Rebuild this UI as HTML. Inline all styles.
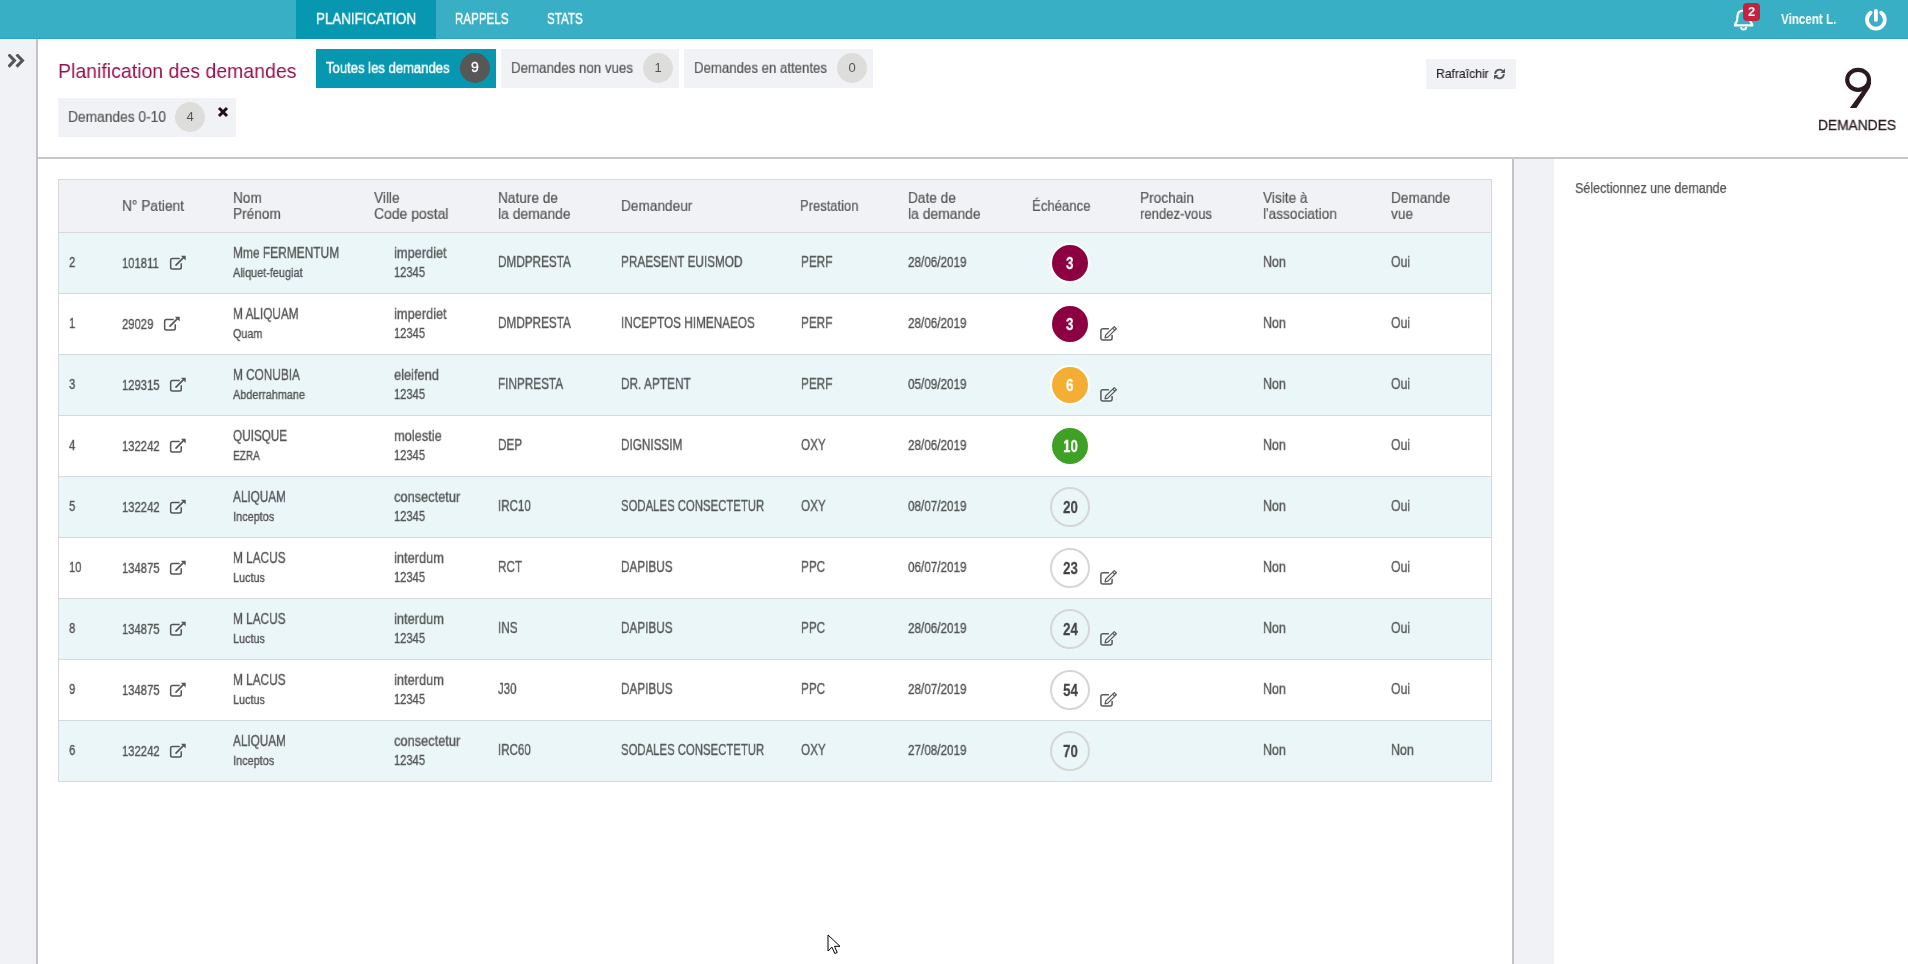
<!DOCTYPE html>
<html><head><meta charset="utf-8"><style>
html,body{margin:0;padding:0;width:1908px;height:964px;overflow:hidden;background:#fff;position:relative}
body{font-family:"Liberation Sans",sans-serif}
.t{position:absolute;white-space:nowrap;transform-origin:0 0;will-change:transform}
.r{position:absolute;box-sizing:border-box}
.r svg{display:block}
.c{position:absolute;text-align:center;font-family:"Liberation Sans",sans-serif;will-change:transform}
</style></head><body>
<div class="r" style="left:0px;top:0px;width:1908px;height:39px;background:#39afc5"></div>
<div class="r" style="left:0px;top:38px;width:1908px;height:1px;background:#2ba8c1"></div>
<div class="r" style="left:296px;top:0px;width:140px;height:39px;background:#0897b0"></div>
<span class="t" style="left:315.5px;top:11.84px;font-size:16px;line-height:16px;color:#fff;font-weight:400;transform:scale(0.8352,0.92);-webkit-text-stroke:0.45px #fff;">PLANIFICATION</span>
<span class="t" style="left:454.8px;top:11.84px;font-size:16px;line-height:16px;color:#fff;font-weight:400;transform:scale(0.7248,0.92);-webkit-text-stroke:0.45px #fff;">RAPPELS</span>
<span class="t" style="left:547.1px;top:11.84px;font-size:16px;line-height:16px;color:#fff;font-weight:400;transform:scale(0.7272,0.92);-webkit-text-stroke:0.45px #fff;">STATS</span>
<span class="t" style="left:1780.8px;top:11.63px;font-size:14.5px;line-height:14.5px;color:#fff;font-weight:700;transform:scaleX(0.8009);">Vincent L.</span>
<div class="r" style="left:0px;top:39px;width:36px;height:925px;background:#f0f2f5"></div>
<div class="r" style="left:36px;top:39px;width:2px;height:925px;background:#c4c4c4"></div>
<span class="t" style="left:58.1px;top:60.12px;font-size:21px;line-height:21px;color:#9c0f4f;font-weight:400;transform:scaleX(0.9285);">Planification des demandes</span>
<div class="r" style="left:316px;top:49px;width:180px;height:39px;background:#0897b0"></div>
<span class="t" style="left:325.9px;top:60.54px;font-size:16px;line-height:16px;color:#fff;font-weight:400;transform:scale(0.8170,0.92);-webkit-text-stroke:0.45px #fff;">Toutes les demandes</span>
<div class="r" style="left:460px;top:53px;width:30px;height:30px;background:#575757;border-radius:50%"></div>
<div class="r" style="left:501px;top:49px;width:178px;height:39px;background:#f0f2f5"></div>
<span class="t" style="left:511.0px;top:60.54px;font-size:16px;line-height:16px;color:#555;font-weight:400;transform:scale(0.8312,0.92);-webkit-text-stroke:0.2px currentColor;">Demandes non vues</span>
<div class="r" style="left:643px;top:53px;width:30px;height:30px;background:#dddddb;border-radius:50%"></div>
<div class="r" style="left:684px;top:49px;width:189px;height:39px;background:#f0f2f5"></div>
<span class="t" style="left:693.9px;top:60.54px;font-size:16px;line-height:16px;color:#555;font-weight:400;transform:scale(0.8260,0.92);-webkit-text-stroke:0.2px currentColor;">Demandes en attentes</span>
<div class="r" style="left:837px;top:53px;width:30px;height:30px;background:#dddddb;border-radius:50%"></div>
<div class="r" style="left:58px;top:98px;width:178px;height:39px;background:#f0f2f5"></div>
<span class="t" style="left:67.8px;top:109.54px;font-size:16px;line-height:16px;color:#555;font-weight:400;transform:scale(0.8607,0.92);-webkit-text-stroke:0.2px currentColor;">Demandes 0-10</span>
<div class="r" style="left:175px;top:102px;width:30px;height:30px;background:#dddddb;border-radius:50%"></div>
<div class="c" style="left:460px;top:53px;width:30px;height:30px;color:#fff;font-size:14px;line-height:29px;-webkit-text-stroke:0.3px #fff">9</div>
<div class="c" style="left:643px;top:53px;width:30px;height:30px;color:#555;font-size:13px;line-height:29px">1</div>
<div class="c" style="left:837px;top:53px;width:30px;height:30px;color:#555;font-size:13px;line-height:29px">0</div>
<div class="c" style="left:175px;top:102px;width:30px;height:30px;color:#555;font-size:13px;line-height:29px">4</div>
<div class="r" style="left:1426px;top:59px;width:90px;height:30px;background:#f0f2f5"></div>
<span class="t" style="left:1436.2px;top:67.10px;font-size:13px;line-height:13px;color:#2b2024;font-weight:400;transform:scaleX(0.9333);-webkit-text-stroke:0.15px #2b2024;">Rafraîchir</span>
<div class="r" style="left:1840px;top:64px;width:36px;height:48px"><svg width="36" height="48" viewBox="0 0 36 48"><ellipse cx="18.1" cy="15.8" rx="10.9" ry="10" fill="none" stroke="#2b1b21" stroke-width="4.2"/><path d="M31.2 17.5Q31 23 27 28L16.4 44L9.8 44L23.5 25.4Z" fill="#2b1b21"/></svg></div>
<span class="t" style="left:1818.2px;top:118.15px;font-size:14px;line-height:14px;color:#2b1b21;font-weight:400;transform:scaleX(0.9830);-webkit-text-stroke:0.3px #2b1b21;">DEMANDES</span>
<div class="r" style="left:38px;top:157px;width:1870px;height:2px;background:#c8c8c8"></div>
<div class="r" style="left:1512px;top:159px;width:2px;height:805px;background:#c4c4c4"></div>
<div class="r" style="left:1514px;top:159px;width:40px;height:805px;background:#f0f2f5"></div>
<span class="t" style="left:1574.7px;top:180.20px;font-size:15px;line-height:15px;color:#555;font-weight:400;transform:scaleX(0.8337);-webkit-text-stroke:0.25px #555;">Sélectionnez une demande</span>
<div class="r" style="left:58px;top:179px;width:1434px;height:54px;background:#f0f2f5"></div>
<div class="r" style="left:58px;top:179px;width:1434px;height:1px;background:#d8d8d8"></div>
<div class="r" style="left:58px;top:232px;width:1434px;height:1px;background:#d8d8d8"></div>
<span class="t" style="left:122.0px;top:199.24px;font-size:16px;line-height:16px;color:#555;font-weight:400;transform:scale(0.8584,0.92);-webkit-text-stroke:0.2px #555;">N° Patient</span>
<span class="t" style="left:232.7px;top:191.24px;font-size:16px;line-height:16px;color:#555;font-weight:400;transform:scale(0.8531,0.92);-webkit-text-stroke:0.2px #555;">Nom</span>
<span class="t" style="left:232.7px;top:207.14px;font-size:16px;line-height:16px;color:#555;font-weight:400;transform:scale(0.8531,0.92);-webkit-text-stroke:0.2px #555;">Prénom</span>
<span class="t" style="left:373.5px;top:191.24px;font-size:16px;line-height:16px;color:#555;font-weight:400;transform:scale(0.8531,0.92);-webkit-text-stroke:0.2px #555;">Ville</span>
<span class="t" style="left:373.5px;top:207.14px;font-size:16px;line-height:16px;color:#555;font-weight:400;transform:scale(0.8723,0.92);-webkit-text-stroke:0.2px #555;">Code postal</span>
<span class="t" style="left:497.9px;top:191.24px;font-size:16px;line-height:16px;color:#555;font-weight:400;transform:scale(0.8531,0.92);-webkit-text-stroke:0.2px #555;">Nature de</span>
<span class="t" style="left:497.9px;top:207.14px;font-size:16px;line-height:16px;color:#555;font-weight:400;transform:scale(0.8681,0.92);-webkit-text-stroke:0.2px #555;">la demande</span>
<span class="t" style="left:620.5px;top:199.24px;font-size:16px;line-height:16px;color:#555;font-weight:400;transform:scale(0.8531,0.92);-webkit-text-stroke:0.2px #555;">Demandeur</span>
<span class="t" style="left:799.8px;top:199.24px;font-size:16px;line-height:16px;color:#555;font-weight:400;transform:scale(0.8105,0.92);-webkit-text-stroke:0.2px #555;">Prestation</span>
<span class="t" style="left:908.0px;top:191.24px;font-size:16px;line-height:16px;color:#555;font-weight:400;transform:scale(0.8531,0.92);-webkit-text-stroke:0.2px #555;">Date de</span>
<span class="t" style="left:908.0px;top:207.14px;font-size:16px;line-height:16px;color:#555;font-weight:400;transform:scale(0.8681,0.92);-webkit-text-stroke:0.2px #555;">la demande</span>
<span class="t" style="left:1032.1px;top:199.24px;font-size:16px;line-height:16px;color:#555;font-weight:400;transform:scale(0.8219,0.92);-webkit-text-stroke:0.2px #555;">Échéance</span>
<span class="t" style="left:1140.0px;top:191.24px;font-size:16px;line-height:16px;color:#555;font-weight:400;transform:scale(0.8531,0.92);-webkit-text-stroke:0.2px #555;">Prochain</span>
<span class="t" style="left:1140.0px;top:207.14px;font-size:16px;line-height:16px;color:#555;font-weight:400;transform:scale(0.8176,0.92);-webkit-text-stroke:0.2px #555;">rendez-vous</span>
<span class="t" style="left:1262.5px;top:191.24px;font-size:16px;line-height:16px;color:#555;font-weight:400;transform:scale(0.8531,0.92);-webkit-text-stroke:0.2px #555;">Visite à</span>
<span class="t" style="left:1262.5px;top:207.14px;font-size:16px;line-height:16px;color:#555;font-weight:400;transform:scale(0.8531,0.92);-webkit-text-stroke:0.2px #555;">l'association</span>
<span class="t" style="left:1390.5px;top:191.24px;font-size:16px;line-height:16px;color:#555;font-weight:400;transform:scale(0.8531,0.92);-webkit-text-stroke:0.2px #555;">Demande</span>
<span class="t" style="left:1390.5px;top:207.14px;font-size:16px;line-height:16px;color:#555;font-weight:400;transform:scale(0.8531,0.92);-webkit-text-stroke:0.2px #555;">vue</span>
<div class="r" style="left:58px;top:233px;width:1434px;height:61px;background:#ebf6f9"></div>
<div class="r" style="left:58px;top:293px;width:1434px;height:1px;background:#d3dadd"></div>
<span class="t" style="left:68.9px;top:255.45px;font-size:14px;line-height:14px;color:#555;font-weight:400;transform:scaleX(0.8040);-webkit-text-stroke:0.35px #555;">2</span>
<span class="t" style="left:122.4px;top:255.95px;font-size:14px;line-height:14px;color:#555;font-weight:400;transform:scaleX(0.8040);-webkit-text-stroke:0.35px #555;">101811</span>
<div class="r" style="left:169.3px;top:255.0px;width:18px;height:16px"><svg width="18" height="16" viewBox="0 0 18 16"><path d="M10.7 3.45H3.4Q1.65 3.45 1.65 5.2V12.3Q1.65 14.05 3.4 14.05H10.5Q12.25 14.05 12.25 12.3V8.2" fill="none" stroke="#555" stroke-width="1.5"/><path d="M7 10.1L14.2 2.9" stroke="#555" stroke-width="1.7" stroke-linecap="round"/><path d="M11.9 0.8H16.7V5.6z" fill="#555"/></svg></div>
<span class="t" style="left:233.0px;top:245.74px;font-size:16px;line-height:16px;color:#555;font-weight:400;transform:scale(0.7466,0.92);-webkit-text-stroke:0.35px #555;">Mme FERMENTUM</span>
<span class="t" style="left:233.0px;top:266.82px;font-size:12.5px;line-height:12.5px;color:#555;font-weight:400;transform:scaleX(0.8708);-webkit-text-stroke:0.35px #555;">Aliquet-feugiat</span>
<span class="t" style="left:394.1px;top:245.74px;font-size:16px;line-height:16px;color:#555;font-weight:400;transform:scale(0.8006,0.92);-webkit-text-stroke:0.35px #555;">imperdiet</span>
<span class="t" style="left:394.3px;top:264.75px;font-size:14px;line-height:14px;color:#555;font-weight:400;transform:scaleX(0.7961);-webkit-text-stroke:0.35px #555;">12345</span>
<span class="t" style="left:498.1px;top:254.64px;font-size:16px;line-height:16px;color:#555;font-weight:400;transform:scale(0.7341,0.92);-webkit-text-stroke:0.35px #555;">DMDPRESTA</span>
<span class="t" style="left:621.4px;top:254.64px;font-size:16px;line-height:16px;color:#555;font-weight:400;transform:scale(0.7359,0.92);-webkit-text-stroke:0.35px #555;">PRAESENT EUISMOD</span>
<span class="t" style="left:800.5px;top:254.64px;font-size:16px;line-height:16px;color:#555;font-weight:400;transform:scale(0.7341,0.92);-webkit-text-stroke:0.35px #555;">PERF</span>
<span class="t" style="left:907.7px;top:255.25px;font-size:14px;line-height:14px;color:#555;font-weight:400;transform:scaleX(0.8347);-webkit-text-stroke:0.35px #555;">28/06/2019</span>
<div class="c" style="left:1050px;top:243px;width:36px;height:36px;border:2px solid #fff;background:#8c0041;border-radius:50%;color:#fff;font-size:17px;line-height:38px;font-weight:700"><span style="display:inline-block;transform:scaleX(0.78);will-change:transform;-webkit-text-stroke:0.3px #fff">3</span></div>
<span class="t" style="left:1262.5px;top:254.64px;font-size:16px;line-height:16px;color:#555;font-weight:400;transform:scale(0.7744,0.92);-webkit-text-stroke:0.35px #555;">Non</span>
<span class="t" style="left:1390.5px;top:254.64px;font-size:16px;line-height:16px;color:#555;font-weight:400;transform:scale(0.7674,0.92);-webkit-text-stroke:0.35px #555;">Oui</span>
<div class="r" style="left:58px;top:294px;width:1434px;height:61px;background:#ffffff"></div>
<div class="r" style="left:58px;top:354px;width:1434px;height:1px;background:#d3dadd"></div>
<span class="t" style="left:68.9px;top:316.45px;font-size:14px;line-height:14px;color:#555;font-weight:400;transform:scaleX(0.8040);-webkit-text-stroke:0.35px #555;">1</span>
<span class="t" style="left:122.4px;top:316.95px;font-size:14px;line-height:14px;color:#555;font-weight:400;transform:scaleX(0.8040);-webkit-text-stroke:0.35px #555;">29029</span>
<div class="r" style="left:163.0px;top:316.0px;width:18px;height:16px"><svg width="18" height="16" viewBox="0 0 18 16"><path d="M10.7 3.45H3.4Q1.65 3.45 1.65 5.2V12.3Q1.65 14.05 3.4 14.05H10.5Q12.25 14.05 12.25 12.3V8.2" fill="none" stroke="#555" stroke-width="1.5"/><path d="M7 10.1L14.2 2.9" stroke="#555" stroke-width="1.7" stroke-linecap="round"/><path d="M11.9 0.8H16.7V5.6z" fill="#555"/></svg></div>
<span class="t" style="left:233.0px;top:306.74px;font-size:16px;line-height:16px;color:#555;font-weight:400;transform:scale(0.7374,0.92);-webkit-text-stroke:0.35px #555;">M ALIQUAM</span>
<span class="t" style="left:233.0px;top:327.82px;font-size:12.5px;line-height:12.5px;color:#555;font-weight:400;transform:scaleX(0.8576);-webkit-text-stroke:0.35px #555;">Quam</span>
<span class="t" style="left:394.1px;top:306.74px;font-size:16px;line-height:16px;color:#555;font-weight:400;transform:scale(0.8006,0.92);-webkit-text-stroke:0.35px #555;">imperdiet</span>
<span class="t" style="left:394.3px;top:325.75px;font-size:14px;line-height:14px;color:#555;font-weight:400;transform:scaleX(0.7961);-webkit-text-stroke:0.35px #555;">12345</span>
<span class="t" style="left:498.1px;top:315.64px;font-size:16px;line-height:16px;color:#555;font-weight:400;transform:scale(0.7341,0.92);-webkit-text-stroke:0.35px #555;">DMDPRESTA</span>
<span class="t" style="left:621.4px;top:315.64px;font-size:16px;line-height:16px;color:#555;font-weight:400;transform:scale(0.7357,0.92);-webkit-text-stroke:0.35px #555;">INCEPTOS HIMENAEOS</span>
<span class="t" style="left:800.5px;top:315.64px;font-size:16px;line-height:16px;color:#555;font-weight:400;transform:scale(0.7341,0.92);-webkit-text-stroke:0.35px #555;">PERF</span>
<span class="t" style="left:907.7px;top:316.25px;font-size:14px;line-height:14px;color:#555;font-weight:400;transform:scaleX(0.8347);-webkit-text-stroke:0.35px #555;">28/06/2019</span>
<div class="c" style="left:1050px;top:304px;width:36px;height:36px;border:2px solid #fff;background:#8c0041;border-radius:50%;color:#fff;font-size:17px;line-height:38px;font-weight:700"><span style="display:inline-block;transform:scaleX(0.78);will-change:transform;-webkit-text-stroke:0.3px #fff">3</span></div>
<div class="r" style="left:1099px;top:326px;width:19px;height:16px"><svg width="19" height="16" viewBox="0 0 19 16"><path d="M9.9 2.8H3.9Q1.9 2.8 1.9 4.8V12.1Q1.9 14.1 3.9 14.1H11.1Q13.1 14.1 13.1 12.1V9.1" fill="none" stroke="#5a5a5a" stroke-width="1.5"/><path d="M6 11.8L6.73 8.98L15.25 0.58L17.35 2.72L8.83 11.12Z" fill="none" stroke="#5a5a5a" stroke-width="1.2" stroke-linejoin="round"/><path d="M13.68 2.12L15.78 4.26" stroke="#5a5a5a" stroke-width="1.1"/></svg></div>
<span class="t" style="left:1262.5px;top:315.64px;font-size:16px;line-height:16px;color:#555;font-weight:400;transform:scale(0.7744,0.92);-webkit-text-stroke:0.35px #555;">Non</span>
<span class="t" style="left:1390.5px;top:315.64px;font-size:16px;line-height:16px;color:#555;font-weight:400;transform:scale(0.7674,0.92);-webkit-text-stroke:0.35px #555;">Oui</span>
<div class="r" style="left:58px;top:355px;width:1434px;height:61px;background:#ebf6f9"></div>
<div class="r" style="left:58px;top:415px;width:1434px;height:1px;background:#d3dadd"></div>
<span class="t" style="left:68.9px;top:377.45px;font-size:14px;line-height:14px;color:#555;font-weight:400;transform:scaleX(0.8040);-webkit-text-stroke:0.35px #555;">3</span>
<span class="t" style="left:122.4px;top:377.95px;font-size:14px;line-height:14px;color:#555;font-weight:400;transform:scaleX(0.8040);-webkit-text-stroke:0.35px #555;">129315</span>
<div class="r" style="left:169.3px;top:377.0px;width:18px;height:16px"><svg width="18" height="16" viewBox="0 0 18 16"><path d="M10.7 3.45H3.4Q1.65 3.45 1.65 5.2V12.3Q1.65 14.05 3.4 14.05H10.5Q12.25 14.05 12.25 12.3V8.2" fill="none" stroke="#555" stroke-width="1.5"/><path d="M7 10.1L14.2 2.9" stroke="#555" stroke-width="1.7" stroke-linecap="round"/><path d="M11.9 0.8H16.7V5.6z" fill="#555"/></svg></div>
<span class="t" style="left:233.0px;top:367.74px;font-size:16px;line-height:16px;color:#555;font-weight:400;transform:scale(0.7374,0.92);-webkit-text-stroke:0.35px #555;">M CONUBIA</span>
<span class="t" style="left:233.0px;top:388.82px;font-size:12.5px;line-height:12.5px;color:#555;font-weight:400;transform:scaleX(0.8710);-webkit-text-stroke:0.35px #555;">Abderrahmane</span>
<span class="t" style="left:394.1px;top:367.74px;font-size:16px;line-height:16px;color:#555;font-weight:400;transform:scale(0.8006,0.92);-webkit-text-stroke:0.35px #555;">eleifend</span>
<span class="t" style="left:394.3px;top:386.75px;font-size:14px;line-height:14px;color:#555;font-weight:400;transform:scaleX(0.7961);-webkit-text-stroke:0.35px #555;">12345</span>
<span class="t" style="left:498.1px;top:376.64px;font-size:16px;line-height:16px;color:#555;font-weight:400;transform:scale(0.7341,0.92);-webkit-text-stroke:0.35px #555;">FINPRESTA</span>
<span class="t" style="left:621.4px;top:376.64px;font-size:16px;line-height:16px;color:#555;font-weight:400;transform:scale(0.7403,0.92);-webkit-text-stroke:0.35px #555;">DR. APTENT</span>
<span class="t" style="left:800.5px;top:376.64px;font-size:16px;line-height:16px;color:#555;font-weight:400;transform:scale(0.7341,0.92);-webkit-text-stroke:0.35px #555;">PERF</span>
<span class="t" style="left:907.7px;top:377.25px;font-size:14px;line-height:14px;color:#555;font-weight:400;transform:scaleX(0.8347);-webkit-text-stroke:0.35px #555;">05/09/2019</span>
<div class="c" style="left:1050px;top:365px;width:36px;height:36px;border:2px solid #fff;background:#f4ae33;border-radius:50%;color:#fff;font-size:17px;line-height:38px;font-weight:700"><span style="display:inline-block;transform:scaleX(0.78);will-change:transform;-webkit-text-stroke:0.3px #fff">6</span></div>
<div class="r" style="left:1099px;top:387px;width:19px;height:16px"><svg width="19" height="16" viewBox="0 0 19 16"><path d="M9.9 2.8H3.9Q1.9 2.8 1.9 4.8V12.1Q1.9 14.1 3.9 14.1H11.1Q13.1 14.1 13.1 12.1V9.1" fill="none" stroke="#5a5a5a" stroke-width="1.5"/><path d="M6 11.8L6.73 8.98L15.25 0.58L17.35 2.72L8.83 11.12Z" fill="none" stroke="#5a5a5a" stroke-width="1.2" stroke-linejoin="round"/><path d="M13.68 2.12L15.78 4.26" stroke="#5a5a5a" stroke-width="1.1"/></svg></div>
<span class="t" style="left:1262.5px;top:376.64px;font-size:16px;line-height:16px;color:#555;font-weight:400;transform:scale(0.7744,0.92);-webkit-text-stroke:0.35px #555;">Non</span>
<span class="t" style="left:1390.5px;top:376.64px;font-size:16px;line-height:16px;color:#555;font-weight:400;transform:scale(0.7674,0.92);-webkit-text-stroke:0.35px #555;">Oui</span>
<div class="r" style="left:58px;top:416px;width:1434px;height:61px;background:#ffffff"></div>
<div class="r" style="left:58px;top:476px;width:1434px;height:1px;background:#d3dadd"></div>
<span class="t" style="left:68.9px;top:438.45px;font-size:14px;line-height:14px;color:#555;font-weight:400;transform:scaleX(0.8040);-webkit-text-stroke:0.35px #555;">4</span>
<span class="t" style="left:122.4px;top:438.95px;font-size:14px;line-height:14px;color:#555;font-weight:400;transform:scaleX(0.8040);-webkit-text-stroke:0.35px #555;">132242</span>
<div class="r" style="left:169.3px;top:438.0px;width:18px;height:16px"><svg width="18" height="16" viewBox="0 0 18 16"><path d="M10.7 3.45H3.4Q1.65 3.45 1.65 5.2V12.3Q1.65 14.05 3.4 14.05H10.5Q12.25 14.05 12.25 12.3V8.2" fill="none" stroke="#555" stroke-width="1.5"/><path d="M7 10.1L14.2 2.9" stroke="#555" stroke-width="1.7" stroke-linecap="round"/><path d="M11.9 0.8H16.7V5.6z" fill="#555"/></svg></div>
<span class="t" style="left:233.0px;top:428.74px;font-size:16px;line-height:16px;color:#555;font-weight:400;transform:scale(0.7341,0.92);-webkit-text-stroke:0.35px #555;">QUISQUE</span>
<span class="t" style="left:233.0px;top:449.82px;font-size:12.5px;line-height:12.5px;color:#555;font-weight:400;transform:scaleX(0.8054);-webkit-text-stroke:0.35px #555;">EZRA</span>
<span class="t" style="left:394.1px;top:428.74px;font-size:16px;line-height:16px;color:#555;font-weight:400;transform:scale(0.8006,0.92);-webkit-text-stroke:0.35px #555;">molestie</span>
<span class="t" style="left:394.3px;top:447.75px;font-size:14px;line-height:14px;color:#555;font-weight:400;transform:scaleX(0.7961);-webkit-text-stroke:0.35px #555;">12345</span>
<span class="t" style="left:498.1px;top:437.64px;font-size:16px;line-height:16px;color:#555;font-weight:400;transform:scale(0.7341,0.92);-webkit-text-stroke:0.35px #555;">DEP</span>
<span class="t" style="left:621.4px;top:437.64px;font-size:16px;line-height:16px;color:#555;font-weight:400;transform:scale(0.7341,0.92);-webkit-text-stroke:0.35px #555;">DIGNISSIM</span>
<span class="t" style="left:800.5px;top:437.64px;font-size:16px;line-height:16px;color:#555;font-weight:400;transform:scale(0.7341,0.92);-webkit-text-stroke:0.35px #555;">OXY</span>
<span class="t" style="left:907.7px;top:438.25px;font-size:14px;line-height:14px;color:#555;font-weight:400;transform:scaleX(0.8347);-webkit-text-stroke:0.35px #555;">28/06/2019</span>
<div class="c" style="left:1050px;top:426px;width:36px;height:36px;border:2px solid #fff;background:#3fa026;border-radius:50%;color:#fff;font-size:17px;line-height:38px;font-weight:700"><span style="display:inline-block;transform:scaleX(0.78);will-change:transform;-webkit-text-stroke:0.3px #fff">10</span></div>
<span class="t" style="left:1262.5px;top:437.64px;font-size:16px;line-height:16px;color:#555;font-weight:400;transform:scale(0.7744,0.92);-webkit-text-stroke:0.35px #555;">Non</span>
<span class="t" style="left:1390.5px;top:437.64px;font-size:16px;line-height:16px;color:#555;font-weight:400;transform:scale(0.7674,0.92);-webkit-text-stroke:0.35px #555;">Oui</span>
<div class="r" style="left:58px;top:477px;width:1434px;height:61px;background:#ebf6f9"></div>
<div class="r" style="left:58px;top:537px;width:1434px;height:1px;background:#d3dadd"></div>
<span class="t" style="left:68.9px;top:499.45px;font-size:14px;line-height:14px;color:#555;font-weight:400;transform:scaleX(0.8040);-webkit-text-stroke:0.35px #555;">5</span>
<span class="t" style="left:122.4px;top:499.95px;font-size:14px;line-height:14px;color:#555;font-weight:400;transform:scaleX(0.8040);-webkit-text-stroke:0.35px #555;">132242</span>
<div class="r" style="left:169.3px;top:499.0px;width:18px;height:16px"><svg width="18" height="16" viewBox="0 0 18 16"><path d="M10.7 3.45H3.4Q1.65 3.45 1.65 5.2V12.3Q1.65 14.05 3.4 14.05H10.5Q12.25 14.05 12.25 12.3V8.2" fill="none" stroke="#555" stroke-width="1.5"/><path d="M7 10.1L14.2 2.9" stroke="#555" stroke-width="1.7" stroke-linecap="round"/><path d="M11.9 0.8H16.7V5.6z" fill="#555"/></svg></div>
<span class="t" style="left:233.0px;top:489.74px;font-size:16px;line-height:16px;color:#555;font-weight:400;transform:scale(0.7341,0.92);-webkit-text-stroke:0.35px #555;">ALIQUAM</span>
<span class="t" style="left:233.0px;top:510.82px;font-size:12.5px;line-height:12.5px;color:#555;font-weight:400;transform:scaleX(0.8730);-webkit-text-stroke:0.35px #555;">Inceptos</span>
<span class="t" style="left:394.1px;top:489.74px;font-size:16px;line-height:16px;color:#555;font-weight:400;transform:scale(0.8006,0.92);-webkit-text-stroke:0.35px #555;">consectetur</span>
<span class="t" style="left:394.3px;top:508.75px;font-size:14px;line-height:14px;color:#555;font-weight:400;transform:scaleX(0.7961);-webkit-text-stroke:0.35px #555;">12345</span>
<span class="t" style="left:498.1px;top:498.64px;font-size:16px;line-height:16px;color:#555;font-weight:400;transform:scale(0.7221,0.92);-webkit-text-stroke:0.35px #555;">IRC10</span>
<span class="t" style="left:621.4px;top:498.64px;font-size:16px;line-height:16px;color:#555;font-weight:400;transform:scale(0.7095,0.92);-webkit-text-stroke:0.35px #555;">SODALES CONSECTETUR</span>
<span class="t" style="left:800.5px;top:498.64px;font-size:16px;line-height:16px;color:#555;font-weight:400;transform:scale(0.7341,0.92);-webkit-text-stroke:0.35px #555;">OXY</span>
<span class="t" style="left:907.7px;top:499.25px;font-size:14px;line-height:14px;color:#555;font-weight:400;transform:scaleX(0.8347);-webkit-text-stroke:0.35px #555;">08/07/2019</span>
<div class="c" style="left:1050px;top:487px;width:36px;height:36px;border:2px solid #d6d6d6;border-radius:50%;color:#444;font-size:17px;line-height:38px;font-weight:700"><span style="display:inline-block;transform:scaleX(0.78);will-change:transform;-webkit-text-stroke:0.3px #444">20</span></div>
<span class="t" style="left:1262.5px;top:498.64px;font-size:16px;line-height:16px;color:#555;font-weight:400;transform:scale(0.7744,0.92);-webkit-text-stroke:0.35px #555;">Non</span>
<span class="t" style="left:1390.5px;top:498.64px;font-size:16px;line-height:16px;color:#555;font-weight:400;transform:scale(0.7674,0.92);-webkit-text-stroke:0.35px #555;">Oui</span>
<div class="r" style="left:58px;top:538px;width:1434px;height:61px;background:#ffffff"></div>
<div class="r" style="left:58px;top:598px;width:1434px;height:1px;background:#d3dadd"></div>
<span class="t" style="left:68.9px;top:560.45px;font-size:14px;line-height:14px;color:#555;font-weight:400;transform:scaleX(0.8040);-webkit-text-stroke:0.35px #555;">10</span>
<span class="t" style="left:122.4px;top:560.95px;font-size:14px;line-height:14px;color:#555;font-weight:400;transform:scaleX(0.8040);-webkit-text-stroke:0.35px #555;">134875</span>
<div class="r" style="left:169.3px;top:560.0px;width:18px;height:16px"><svg width="18" height="16" viewBox="0 0 18 16"><path d="M10.7 3.45H3.4Q1.65 3.45 1.65 5.2V12.3Q1.65 14.05 3.4 14.05H10.5Q12.25 14.05 12.25 12.3V8.2" fill="none" stroke="#555" stroke-width="1.5"/><path d="M7 10.1L14.2 2.9" stroke="#555" stroke-width="1.7" stroke-linecap="round"/><path d="M11.9 0.8H16.7V5.6z" fill="#555"/></svg></div>
<span class="t" style="left:233.0px;top:550.74px;font-size:16px;line-height:16px;color:#555;font-weight:400;transform:scale(0.7383,0.92);-webkit-text-stroke:0.35px #555;">M LACUS</span>
<span class="t" style="left:233.0px;top:571.82px;font-size:12.5px;line-height:12.5px;color:#555;font-weight:400;transform:scaleX(0.8646);-webkit-text-stroke:0.35px #555;">Luctus</span>
<span class="t" style="left:394.1px;top:550.74px;font-size:16px;line-height:16px;color:#555;font-weight:400;transform:scale(0.8006,0.92);-webkit-text-stroke:0.35px #555;">interdum</span>
<span class="t" style="left:394.3px;top:569.75px;font-size:14px;line-height:14px;color:#555;font-weight:400;transform:scaleX(0.7961);-webkit-text-stroke:0.35px #555;">12345</span>
<span class="t" style="left:498.1px;top:559.64px;font-size:16px;line-height:16px;color:#555;font-weight:400;transform:scale(0.7341,0.92);-webkit-text-stroke:0.35px #555;">RCT</span>
<span class="t" style="left:621.4px;top:559.64px;font-size:16px;line-height:16px;color:#555;font-weight:400;transform:scale(0.7341,0.92);-webkit-text-stroke:0.35px #555;">DAPIBUS</span>
<span class="t" style="left:800.5px;top:559.64px;font-size:16px;line-height:16px;color:#555;font-weight:400;transform:scale(0.7341,0.92);-webkit-text-stroke:0.35px #555;">PPC</span>
<span class="t" style="left:907.7px;top:560.25px;font-size:14px;line-height:14px;color:#555;font-weight:400;transform:scaleX(0.8347);-webkit-text-stroke:0.35px #555;">06/07/2019</span>
<div class="c" style="left:1050px;top:548px;width:36px;height:36px;border:2px solid #d6d6d6;border-radius:50%;color:#444;font-size:17px;line-height:38px;font-weight:700"><span style="display:inline-block;transform:scaleX(0.78);will-change:transform;-webkit-text-stroke:0.3px #444">23</span></div>
<div class="r" style="left:1099px;top:570px;width:19px;height:16px"><svg width="19" height="16" viewBox="0 0 19 16"><path d="M9.9 2.8H3.9Q1.9 2.8 1.9 4.8V12.1Q1.9 14.1 3.9 14.1H11.1Q13.1 14.1 13.1 12.1V9.1" fill="none" stroke="#5a5a5a" stroke-width="1.5"/><path d="M6 11.8L6.73 8.98L15.25 0.58L17.35 2.72L8.83 11.12Z" fill="none" stroke="#5a5a5a" stroke-width="1.2" stroke-linejoin="round"/><path d="M13.68 2.12L15.78 4.26" stroke="#5a5a5a" stroke-width="1.1"/></svg></div>
<span class="t" style="left:1262.5px;top:559.64px;font-size:16px;line-height:16px;color:#555;font-weight:400;transform:scale(0.7744,0.92);-webkit-text-stroke:0.35px #555;">Non</span>
<span class="t" style="left:1390.5px;top:559.64px;font-size:16px;line-height:16px;color:#555;font-weight:400;transform:scale(0.7674,0.92);-webkit-text-stroke:0.35px #555;">Oui</span>
<div class="r" style="left:58px;top:599px;width:1434px;height:61px;background:#ebf6f9"></div>
<div class="r" style="left:58px;top:659px;width:1434px;height:1px;background:#d3dadd"></div>
<span class="t" style="left:68.9px;top:621.45px;font-size:14px;line-height:14px;color:#555;font-weight:400;transform:scaleX(0.8040);-webkit-text-stroke:0.35px #555;">8</span>
<span class="t" style="left:122.4px;top:621.95px;font-size:14px;line-height:14px;color:#555;font-weight:400;transform:scaleX(0.8040);-webkit-text-stroke:0.35px #555;">134875</span>
<div class="r" style="left:169.3px;top:621.0px;width:18px;height:16px"><svg width="18" height="16" viewBox="0 0 18 16"><path d="M10.7 3.45H3.4Q1.65 3.45 1.65 5.2V12.3Q1.65 14.05 3.4 14.05H10.5Q12.25 14.05 12.25 12.3V8.2" fill="none" stroke="#555" stroke-width="1.5"/><path d="M7 10.1L14.2 2.9" stroke="#555" stroke-width="1.7" stroke-linecap="round"/><path d="M11.9 0.8H16.7V5.6z" fill="#555"/></svg></div>
<span class="t" style="left:233.0px;top:611.74px;font-size:16px;line-height:16px;color:#555;font-weight:400;transform:scale(0.7383,0.92);-webkit-text-stroke:0.35px #555;">M LACUS</span>
<span class="t" style="left:233.0px;top:632.82px;font-size:12.5px;line-height:12.5px;color:#555;font-weight:400;transform:scaleX(0.8646);-webkit-text-stroke:0.35px #555;">Luctus</span>
<span class="t" style="left:394.1px;top:611.74px;font-size:16px;line-height:16px;color:#555;font-weight:400;transform:scale(0.8006,0.92);-webkit-text-stroke:0.35px #555;">interdum</span>
<span class="t" style="left:394.3px;top:630.75px;font-size:14px;line-height:14px;color:#555;font-weight:400;transform:scaleX(0.7961);-webkit-text-stroke:0.35px #555;">12345</span>
<span class="t" style="left:498.1px;top:620.64px;font-size:16px;line-height:16px;color:#555;font-weight:400;transform:scale(0.7341,0.92);-webkit-text-stroke:0.35px #555;">INS</span>
<span class="t" style="left:621.4px;top:620.64px;font-size:16px;line-height:16px;color:#555;font-weight:400;transform:scale(0.7341,0.92);-webkit-text-stroke:0.35px #555;">DAPIBUS</span>
<span class="t" style="left:800.5px;top:620.64px;font-size:16px;line-height:16px;color:#555;font-weight:400;transform:scale(0.7341,0.92);-webkit-text-stroke:0.35px #555;">PPC</span>
<span class="t" style="left:907.7px;top:621.25px;font-size:14px;line-height:14px;color:#555;font-weight:400;transform:scaleX(0.8347);-webkit-text-stroke:0.35px #555;">28/06/2019</span>
<div class="c" style="left:1050px;top:609px;width:36px;height:36px;border:2px solid #d6d6d6;border-radius:50%;color:#444;font-size:17px;line-height:38px;font-weight:700"><span style="display:inline-block;transform:scaleX(0.78);will-change:transform;-webkit-text-stroke:0.3px #444">24</span></div>
<div class="r" style="left:1099px;top:631px;width:19px;height:16px"><svg width="19" height="16" viewBox="0 0 19 16"><path d="M9.9 2.8H3.9Q1.9 2.8 1.9 4.8V12.1Q1.9 14.1 3.9 14.1H11.1Q13.1 14.1 13.1 12.1V9.1" fill="none" stroke="#5a5a5a" stroke-width="1.5"/><path d="M6 11.8L6.73 8.98L15.25 0.58L17.35 2.72L8.83 11.12Z" fill="none" stroke="#5a5a5a" stroke-width="1.2" stroke-linejoin="round"/><path d="M13.68 2.12L15.78 4.26" stroke="#5a5a5a" stroke-width="1.1"/></svg></div>
<span class="t" style="left:1262.5px;top:620.64px;font-size:16px;line-height:16px;color:#555;font-weight:400;transform:scale(0.7744,0.92);-webkit-text-stroke:0.35px #555;">Non</span>
<span class="t" style="left:1390.5px;top:620.64px;font-size:16px;line-height:16px;color:#555;font-weight:400;transform:scale(0.7674,0.92);-webkit-text-stroke:0.35px #555;">Oui</span>
<div class="r" style="left:58px;top:660px;width:1434px;height:61px;background:#ffffff"></div>
<div class="r" style="left:58px;top:720px;width:1434px;height:1px;background:#d3dadd"></div>
<span class="t" style="left:68.9px;top:682.45px;font-size:14px;line-height:14px;color:#555;font-weight:400;transform:scaleX(0.8040);-webkit-text-stroke:0.35px #555;">9</span>
<span class="t" style="left:122.4px;top:682.95px;font-size:14px;line-height:14px;color:#555;font-weight:400;transform:scaleX(0.8040);-webkit-text-stroke:0.35px #555;">134875</span>
<div class="r" style="left:169.3px;top:682.0px;width:18px;height:16px"><svg width="18" height="16" viewBox="0 0 18 16"><path d="M10.7 3.45H3.4Q1.65 3.45 1.65 5.2V12.3Q1.65 14.05 3.4 14.05H10.5Q12.25 14.05 12.25 12.3V8.2" fill="none" stroke="#555" stroke-width="1.5"/><path d="M7 10.1L14.2 2.9" stroke="#555" stroke-width="1.7" stroke-linecap="round"/><path d="M11.9 0.8H16.7V5.6z" fill="#555"/></svg></div>
<span class="t" style="left:233.0px;top:672.74px;font-size:16px;line-height:16px;color:#555;font-weight:400;transform:scale(0.7383,0.92);-webkit-text-stroke:0.35px #555;">M LACUS</span>
<span class="t" style="left:233.0px;top:693.82px;font-size:12.5px;line-height:12.5px;color:#555;font-weight:400;transform:scaleX(0.8646);-webkit-text-stroke:0.35px #555;">Luctus</span>
<span class="t" style="left:394.1px;top:672.74px;font-size:16px;line-height:16px;color:#555;font-weight:400;transform:scale(0.8006,0.92);-webkit-text-stroke:0.35px #555;">interdum</span>
<span class="t" style="left:394.3px;top:691.75px;font-size:14px;line-height:14px;color:#555;font-weight:400;transform:scaleX(0.7961);-webkit-text-stroke:0.35px #555;">12345</span>
<span class="t" style="left:498.1px;top:681.64px;font-size:16px;line-height:16px;color:#555;font-weight:400;transform:scale(0.7130,0.92);-webkit-text-stroke:0.35px #555;">J30</span>
<span class="t" style="left:621.4px;top:681.64px;font-size:16px;line-height:16px;color:#555;font-weight:400;transform:scale(0.7341,0.92);-webkit-text-stroke:0.35px #555;">DAPIBUS</span>
<span class="t" style="left:800.5px;top:681.64px;font-size:16px;line-height:16px;color:#555;font-weight:400;transform:scale(0.7341,0.92);-webkit-text-stroke:0.35px #555;">PPC</span>
<span class="t" style="left:907.7px;top:682.25px;font-size:14px;line-height:14px;color:#555;font-weight:400;transform:scaleX(0.8347);-webkit-text-stroke:0.35px #555;">28/07/2019</span>
<div class="c" style="left:1050px;top:670px;width:36px;height:36px;border:2px solid #d6d6d6;border-radius:50%;color:#444;font-size:17px;line-height:38px;font-weight:700"><span style="display:inline-block;transform:scaleX(0.78);will-change:transform;-webkit-text-stroke:0.3px #444">54</span></div>
<div class="r" style="left:1099px;top:692px;width:19px;height:16px"><svg width="19" height="16" viewBox="0 0 19 16"><path d="M9.9 2.8H3.9Q1.9 2.8 1.9 4.8V12.1Q1.9 14.1 3.9 14.1H11.1Q13.1 14.1 13.1 12.1V9.1" fill="none" stroke="#5a5a5a" stroke-width="1.5"/><path d="M6 11.8L6.73 8.98L15.25 0.58L17.35 2.72L8.83 11.12Z" fill="none" stroke="#5a5a5a" stroke-width="1.2" stroke-linejoin="round"/><path d="M13.68 2.12L15.78 4.26" stroke="#5a5a5a" stroke-width="1.1"/></svg></div>
<span class="t" style="left:1262.5px;top:681.64px;font-size:16px;line-height:16px;color:#555;font-weight:400;transform:scale(0.7744,0.92);-webkit-text-stroke:0.35px #555;">Non</span>
<span class="t" style="left:1390.5px;top:681.64px;font-size:16px;line-height:16px;color:#555;font-weight:400;transform:scale(0.7674,0.92);-webkit-text-stroke:0.35px #555;">Oui</span>
<div class="r" style="left:58px;top:721px;width:1434px;height:61px;background:#ebf6f9"></div>
<div class="r" style="left:58px;top:781px;width:1434px;height:1px;background:#d3dadd"></div>
<span class="t" style="left:68.9px;top:743.45px;font-size:14px;line-height:14px;color:#555;font-weight:400;transform:scaleX(0.8040);-webkit-text-stroke:0.35px #555;">6</span>
<span class="t" style="left:122.4px;top:743.95px;font-size:14px;line-height:14px;color:#555;font-weight:400;transform:scaleX(0.8040);-webkit-text-stroke:0.35px #555;">132242</span>
<div class="r" style="left:169.3px;top:743.0px;width:18px;height:16px"><svg width="18" height="16" viewBox="0 0 18 16"><path d="M10.7 3.45H3.4Q1.65 3.45 1.65 5.2V12.3Q1.65 14.05 3.4 14.05H10.5Q12.25 14.05 12.25 12.3V8.2" fill="none" stroke="#555" stroke-width="1.5"/><path d="M7 10.1L14.2 2.9" stroke="#555" stroke-width="1.7" stroke-linecap="round"/><path d="M11.9 0.8H16.7V5.6z" fill="#555"/></svg></div>
<span class="t" style="left:233.0px;top:733.74px;font-size:16px;line-height:16px;color:#555;font-weight:400;transform:scale(0.7341,0.92);-webkit-text-stroke:0.35px #555;">ALIQUAM</span>
<span class="t" style="left:233.0px;top:754.82px;font-size:12.5px;line-height:12.5px;color:#555;font-weight:400;transform:scaleX(0.8730);-webkit-text-stroke:0.35px #555;">Inceptos</span>
<span class="t" style="left:394.1px;top:733.74px;font-size:16px;line-height:16px;color:#555;font-weight:400;transform:scale(0.8006,0.92);-webkit-text-stroke:0.35px #555;">consectetur</span>
<span class="t" style="left:394.3px;top:752.75px;font-size:14px;line-height:14px;color:#555;font-weight:400;transform:scaleX(0.7961);-webkit-text-stroke:0.35px #555;">12345</span>
<span class="t" style="left:498.1px;top:742.64px;font-size:16px;line-height:16px;color:#555;font-weight:400;transform:scale(0.7221,0.92);-webkit-text-stroke:0.35px #555;">IRC60</span>
<span class="t" style="left:621.4px;top:742.64px;font-size:16px;line-height:16px;color:#555;font-weight:400;transform:scale(0.7095,0.92);-webkit-text-stroke:0.35px #555;">SODALES CONSECTETUR</span>
<span class="t" style="left:800.5px;top:742.64px;font-size:16px;line-height:16px;color:#555;font-weight:400;transform:scale(0.7341,0.92);-webkit-text-stroke:0.35px #555;">OXY</span>
<span class="t" style="left:907.7px;top:743.25px;font-size:14px;line-height:14px;color:#555;font-weight:400;transform:scaleX(0.8347);-webkit-text-stroke:0.35px #555;">27/08/2019</span>
<div class="c" style="left:1050px;top:731px;width:36px;height:36px;border:2px solid #d6d6d6;border-radius:50%;color:#444;font-size:17px;line-height:38px;font-weight:700"><span style="display:inline-block;transform:scaleX(0.78);will-change:transform;-webkit-text-stroke:0.3px #444">70</span></div>
<span class="t" style="left:1262.5px;top:742.64px;font-size:16px;line-height:16px;color:#555;font-weight:400;transform:scale(0.7744,0.92);-webkit-text-stroke:0.35px #555;">Non</span>
<span class="t" style="left:1390.5px;top:742.64px;font-size:16px;line-height:16px;color:#555;font-weight:400;transform:scale(0.7744,0.92);-webkit-text-stroke:0.35px #555;">Non</span>
<div class="r" style="left:58px;top:179px;width:1px;height:603px;background:#d8d8d8"></div>
<div class="r" style="left:1491px;top:179px;width:1px;height:603px;background:#d8d8d8"></div>
<div class="r" style="left:7.5px;top:53.5px;width:18px;height:14px"><svg width="18" height="14" viewBox="0 0 18 14"><path d="M1.6 1.6L6.5 6.6L1.6 11.6M9.6 1.6L14.5 6.6L9.6 11.6" fill="none" stroke="#555" stroke-width="3" stroke-linecap="square"/></svg></div>
<div class="r" style="left:1728px;top:0px;width:32px;height:34px"><svg width="32" height="34" viewBox="0 0 32 34"><path d="M6.9 25.4Q6.8 24.1 8 22.8Q9.4 21.2 9.4 18V16.6Q9.4 10.6 15.6 10.6Q21.8 10.6 21.8 16.6V18Q21.8 21.2 23.2 22.8Q24.4 24.1 24.3 25.4Z" fill="none" stroke="#fff" stroke-width="2.2" stroke-linejoin="round"/><path d="M13.1 27A2.5 2.5 0 0 0 18.1 27" fill="none" stroke="#fff" stroke-width="2"/></svg></div>
<div class="c" style="left:1743px;top:3px;width:17px;height:18px;background:#c8203f;border-radius:4px;color:#fff;font-size:13px;line-height:18px;font-weight:700">2</div>
<div class="r" style="left:1865px;top:9px;width:22px;height:23px"><svg width="22" height="23" viewBox="0 0 22 23"><path d="M5.54 3.7A8.9 8.9 0 1 0 16.26 3.7" fill="none" stroke="#fff" stroke-width="3.8" stroke-linecap="round"/><path d="M10.9 1.9V10.9" stroke="#fff" stroke-width="3.8" stroke-linecap="round"/></svg></div>
<div class="r" style="left:217px;top:105.6px;width:12px;height:12px"><svg width="12" height="12" viewBox="0 0 12 12"><path d="M2 2L10 10M10 2L2 10" stroke="#220f18" stroke-width="3"/></svg></div>
<div class="r" style="left:1493px;top:67.5px;width:13px;height:12px"><svg width="13" height="12" viewBox="0 0 13 12"><path d="M2.2 6A4.3 4.3 0 0 1 10 3.5" fill="none" stroke="#555" stroke-width="1.8"/><path d="M10.8 6A4.3 4.3 0 0 1 3 8.5" fill="none" stroke="#555" stroke-width="1.8"/><path d="M12 0.5V5H7.5z" fill="#555"/><path d="M1 11.5V7H5.5z" fill="#555"/></svg></div>
<div class="r" style="left:826.9px;top:933.7px;width:14px;height:21px"><svg width="14" height="21" viewBox="0 0 14 21"><path d="M1 1v16l4-3.8 2.8 6.3 2.4-1-2.7-6.2h5.5z" fill="#fff" stroke="#000" stroke-width="1" stroke-linejoin="round"/></svg></div>
</body></html>
